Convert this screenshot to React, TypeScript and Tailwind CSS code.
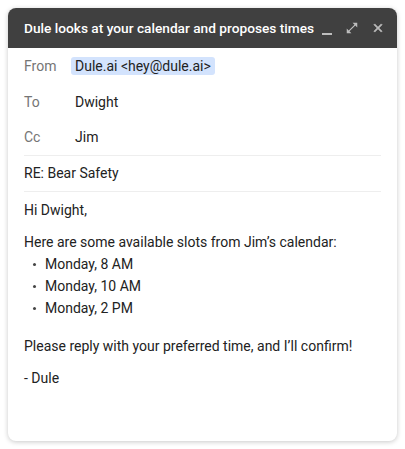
export default function App() {
  const slots = ["Monday, 8 AM", "Monday, 10 AM", "Monday, 2 PM"];
  return (
    <div className="min-h-screen bg-white p-2 font-['Roboto',sans-serif] text-[14px] text-[#222]">
      <div className="flex h-[433px] w-[389px] flex-col overflow-hidden rounded-lg bg-white shadow-[0_1px_5px_rgba(0,0,0,0.22)]">
        <div className="flex h-10 shrink-0 items-center bg-[#404040] pl-4 pr-3 text-white">
          <span className="flex-1 whitespace-nowrap text-[13.7px] font-medium">
            Dule looks at your calendar and proposes times
          </span>
          <div className="flex items-center gap-[12px] text-[#bdbdbd]">
            <svg width="12" height="12" viewBox="0 0 12 12" className="mt-1">
              <rect x="1" y="9" width="10" height="2" fill="currentColor" />
            </svg>
            <svg width="14" height="14" viewBox="0 0 24 24" fill="currentColor">
              <path d="M21 11V3h-8l3.29 3.29-10 10L3 13v8h8l-3.29-3.29 10-10z" />
            </svg>
            <svg width="14" height="14" viewBox="0 0 24 24" fill="currentColor">
              <path d="M19 6.41 17.59 5 12 10.59 6.41 5 5 6.41 10.59 12 5 17.59 6.41 19 12 13.41 17.59 19 19 17.59 13.41 12z" stroke="currentColor" strokeWidth="1.2" />
            </svg>
          </div>
        </div>
        <div className="px-4">
          <div className="flex h-9 items-center">
            <span className="w-[47px] text-[#757575]">From</span>
            <span className="rounded-[3px] bg-[#d3e3fd] px-1 leading-[18px]">Dule.ai &lt;hey@dule.ai&gt;</span>
          </div>
          <div className="flex h-9 items-center">
            <span className="w-[47px] text-[#757575]">To</span>
            <span className="px-1">Dwight</span>
          </div>
          <div className="flex h-9 items-center border-b border-[#eeeeee]">
            <span className="w-[47px] text-[#757575]">Cc</span>
            <span className="px-1">Jim</span>
          </div>
          <div className="flex h-9 items-center border-b border-[#eeeeee]">RE: Bear Safety</div>
          <div className="pt-[7px] leading-[22px]">
            <p>Hi Dwight,</p>
            <p className="mt-[10px]">Here are some available slots from Jim’s calendar:</p>
            <ul className="mb-4">
              {slots.map((s) => (
                <li key={s} className="flex items-center">
                  <span className="ml-[9px] mr-[9px] h-[3px] w-[3px] rounded-full bg-[#444]" />
                  {s}
                </li>
              ))}
            </ul>
            <p>Please reply with your preferred time, and I’ll confirm!</p>
            <p className="mt-[10px]">- Dule</p>
          </div>
        </div>
      </div>
    </div>
  );
}
